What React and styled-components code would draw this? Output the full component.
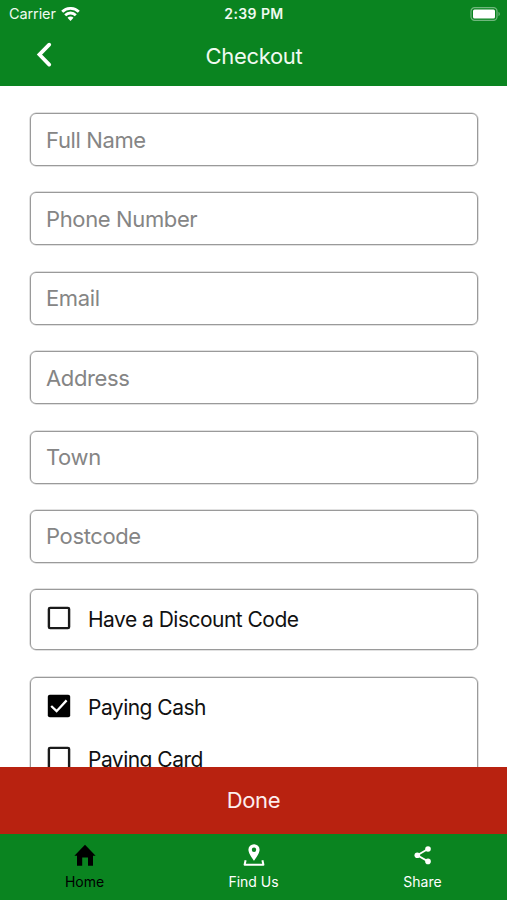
import { useState } from "react";
import styled, { createGlobalStyle } from "styled-components";

const fields = ["Full Name", "Phone Number", "Email", "Address", "Town", "Postcode"];

const CheckRow = ({ label, checked, onToggle }) => (
    <Row role="checkbox" aria-checked={checked} onClick={onToggle}>
        <CheckIcon viewBox="0 0 24 24">
            {checked ? (
                <>
                    <rect x="0.8" y="0.8" width="22.4" height="22.4" rx="2" fill="#000" />
                    <path d="M4.2 12l5.4 5.2L19.6 6.4" stroke="#fff" strokeWidth="2.3" />
                </>
            ) : (
                <rect x="1.9" y="1.9" width="20.2" height="20.2" rx="1.2" stroke="#1a1a1a" strokeWidth="2.4" />
            )}
        </CheckIcon>
        <RowLabel>{label}</RowLabel>
    </Row>
);

const App = () => {

    const [discount, setDiscount] = useState(false);
    const [payment, setPayment] = useState("cash");

    return (
        <Screen>
            <GlobalStyle />
            <Header>
                <StatusBar>
                    <Carrier>
                        <span>Carrier</span>
                        <svg width="19" height="14" viewBox="0 0 19 14" fill="none" stroke="#fff" strokeWidth="2.8">
                            <path d="M1.2 4.8a11.8 11.8 0 0 1 16.6 0" />
                            <path d="M4.2 8.2a7.5 7.5 0 0 1 10.6 0" />
                            <path d="M9.5 14L6.5 10.8a4.2 4.2 0 0 1 6 0z" fill="#fff" stroke="none" />
                        </svg>
                    </Carrier>
                    <Time>2:39 PM</Time>
                    <Battery width="31" height="14" viewBox="0 0 31 14">
                        <rect x="1" y="0.7" width="26" height="12.6" rx="3.6" fill="none" stroke="#fff" strokeOpacity="0.42" strokeWidth="1.2" />
                        <rect x="3" y="2.6" width="22" height="8.8" rx="1.5" fill="#fff" />
                        <path d="M28.5 4.8c1.8.8 1.8 3.6 0 4.4z" fill="#fff" fillOpacity="0.42" />
                    </Battery>
                </StatusBar>
                <TitleBar>
                    <Back type="button" aria-label="Back">
                        <svg width="16" height="26" viewBox="0 0 16 26" fill="none" stroke="#fff" strokeWidth="3.7" strokeLinecap="round">
                            <path d="M13.2 2.6L3.4 12.6L13.2 22.6" />
                        </svg>
                    </Back>
                    <Title>Checkout</Title>
                </TitleBar>
            </Header>
            <Form>
                {fields.map((field) => (
                    <Field key={field}>
                        <span>{field}</span>
                    </Field>
                ))}
                <Options>
                    <CheckRow label="Have a Discount Code" checked={discount} onToggle={() => setDiscount(!discount)} />
                </Options>
                <Options>
                    <CheckRow label="Paying Cash" checked={payment === "cash"} onToggle={() => setPayment("cash")} />
                    <CheckRow label="Paying Card" checked={payment === "card"} onToggle={() => setPayment("card")} />
                </Options>
            </Form>
            <Done type="button">Done</Done>
            <TabBar>
                <Tab type="button" $active>
                    <svg width="24" height="24" viewBox="0 0 24 24" fill="currentColor">
                        <path d="M12 1.7L22.6 12.7H20V22.7H15V14.5H9.2V22.7H4V12.7H1.4z" />
                    </svg>
                    <span>Home</span>
                </Tab>
                <Tab type="button">
                    <svg width="24" height="24" viewBox="0 0 24 24" fill="currentColor">
                        <path fillRule="evenodd" d="M12 1.2a5.6 5.6 0 0 1 5.6 5.6c0 4-5.6 11-5.6 11S6.4 10.8 6.4 6.8a5.6 5.6 0 0 1 5.6-5.6zm0 3.4a2.2 2.2 0 1 0 0 4.4 2.2 2.2 0 0 0 0-4.4z" />
                        <path d="M3.6 17.2L2.6 21.7H21.4L20.4 17.2" fill="none" stroke="currentColor" strokeWidth="2" strokeLinejoin="round" />
                    </svg>
                    <span>Find Us</span>
                </Tab>
                <Tab type="button">
                    <svg width="24" height="24" viewBox="0 0 24 24" fill="currentColor">
                        <path d="M17 6L6.3 12.2L17 18.4" fill="none" stroke="currentColor" strokeWidth="1.8" />
                        <circle cx="17" cy="6" r="2.8" />
                        <circle cx="6.3" cy="12.2" r="2.8" />
                        <circle cx="17" cy="18.4" r="2.8" />
                    </svg>
                    <span>Share</span>
                </Tab>
            </TabBar>
        </Screen>
    );
}

const GlobalStyle = createGlobalStyle`
    * {
        box-sizing: border-box;
    }

    body {
        margin: 0;
        background-color: white;
    }

    button {
        margin: 0;
        padding: 0;
        border: none;
        background: none;
        color: inherit;
        font: inherit;
    }
`

const Screen = styled.div`
    display: flex;
    flex-direction: column;
    width: 507px;
    height: 900px;
    overflow: hidden;
    font-family: Inter, "Liberation Sans", sans-serif;
`

const Header = styled.header`
    flex: none;
    height: 86px;
    background-color: #0a8420;
    color: #f0faf0;
`

const StatusBar = styled.div`
    display: grid;
    grid-template-columns: 1fr auto 1fr;
    align-items: center;
    height: 27px;
    padding: 0 6px 0 9px;
`

const Carrier = styled.div`
    display: flex;
    align-items: center;
    gap: 5px;
    font-size: 14.5px;
    letter-spacing: -0.1px;
`

const Time = styled.span`
    font-size: 14px;
    font-weight: 600;
    letter-spacing: 0.4px;
    margin-right: 2px;
`

const Battery = styled.svg`
    justify-self: end;
`

const TitleBar = styled.div`
    display: grid;
    grid-template-columns: 1fr auto 1fr;
    align-items: center;
    height: 58px;
`

const Back = styled.button`
    display: flex;
    padding: 0 0 3px 36px;
`

const Title = styled.h1`
    margin: 0;
    padding-left: 1px;
    font-size: 22px;
    font-weight: 400;
    letter-spacing: -0.32px;
`

const Form = styled.main`
    flex: 1;
    display: flex;
    flex-direction: column;
    gap: 26.4px;
    min-height: 0;
    padding: 27px 29px 0 30px;
    overflow: hidden;
`

const Field = styled.div`
    flex: none;
    display: flex;
    align-items: center;
    height: 53px;
    padding: 0 15px;
    border: 1px solid #9a9a9a;
    border-radius: 6px;
    box-shadow: 0 0 0 0.5px #c4c4c4;
    color: #858585;
    font-size: 22px;
    letter-spacing: -0.37px;
`

const Options = styled.div`
    flex: none;
    padding: 3px 16px 4px;
    border: 1px solid #9a9a9a;
    border-radius: 6px;
    box-shadow: 0 0 0 0.5px #c4c4c4;
`

const Row = styled.div`
    display: flex;
    align-items: center;
    gap: 17px;
    height: 52px;
`

const CheckIcon = styled.svg`
    width: 24px;
    height: 24px;
    margin-bottom: 2px;
    fill: none;
`

const RowLabel = styled.span`
    padding-top: 1px;
    color: #111;
    font-size: 21px;
    letter-spacing: -0.52px;
`

const Done = styled.button`
    flex: none;
    height: 67px;
    padding-bottom: 1px;
    background-color: #b82210;
    color: #fdeeee;
    font-size: 22px;
    letter-spacing: -0.4px;
`

const TabBar = styled.nav`
    flex: none;
    display: grid;
    grid-template-columns: repeat(3, 1fr);
    height: 66px;
    background-color: #0a8420;
`

const Tab = styled.button`
    display: flex;
    flex-direction: column;
    align-items: center;
    gap: 6px;
    padding-top: 9px;
    color: ${({ $active }) => ($active ? "#000" : "#fff")};
    font-size: 14px;
`

export default App;
